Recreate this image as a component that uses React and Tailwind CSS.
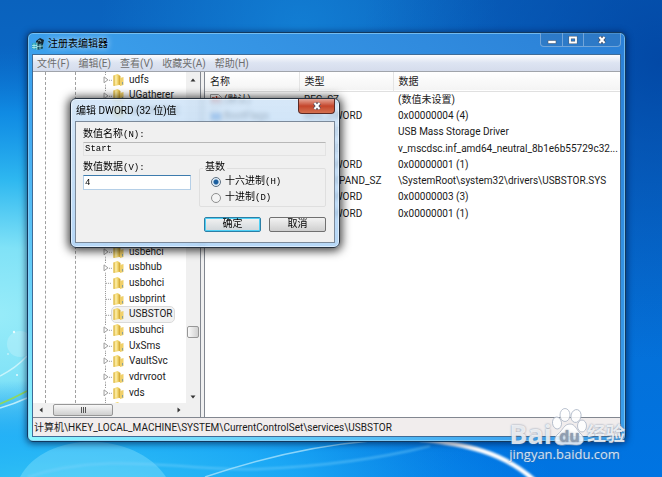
import { useState } from 'react';

const MENUS = ['文件(F)', '编辑(E)', '查看(V)', '收藏夹(A)', '帮助(H)'];

const KEYS = [
  { name: 'udfs', expandable: true },
  { name: 'UGatherer', expandable: true },
  { name: 'UGTHRSVC', expandable: true },
  { name: 'UI0Detect', expandable: false },
  { name: 'uliagpkx', expandable: true },
  { name: 'umbus', expandable: true },
  { name: 'UmPass', expandable: true },
  { name: 'umpusb', expandable: true },
  { name: 'upnphost', expandable: true },
  { name: 'usbccgp', expandable: false },
  { name: 'usbcir', expandable: false },
  { name: 'usbehci', expandable: true },
  { name: 'usbhub', expandable: true },
  { name: 'usbohci', expandable: false },
  { name: 'usbprint', expandable: false },
  { name: 'USBSTOR', expandable: false },
  { name: 'usbuhci', expandable: true },
  { name: 'UxSms', expandable: true },
  { name: 'VaultSvc', expandable: true },
  { name: 'vdrvroot', expandable: true },
  { name: 'vds', expandable: true },
  { name: '', expandable: true },
];

const VALUES = [
  { name: '(默认)', type: 'REG_SZ', data: '(数值未设置)' },
  { name: 'BootFlags', type: 'REG_DWORD', data: '0x00000004 (4)' },
  { name: 'DisplayName', type: 'REG_SZ', data: 'USB Mass Storage Driver' },
  { name: 'DriverPack', type: 'REG_SZ', data: 'v_mscdsc.inf_amd64_neutral_8b1e6b55729c32...' },
  { name: 'ErrorControl', type: 'REG_DWORD', data: '0x00000001 (1)' },
  { name: 'ImagePath', type: 'REG_EXPAND_SZ', data: '\\SystemRoot\\system32\\drivers\\USBSTOR.SYS' },
  { name: 'Start', type: 'REG_DWORD', data: '0x00000003 (3)' },
  { name: 'Type', type: 'REG_DWORD', data: '0x00000001 (1)' },
];

function Wallpaper() {
  return (
    <svg className="absolute inset-0 h-full w-full" viewBox="0 0 662 477" preserveAspectRatio="none" aria-hidden="true">
      <defs>
        <linearGradient id="sky" x1="0" y1="0" x2="0" y2="1">
          <stop offset="0" stopColor="#0a62bd" />
          <stop offset="0.3" stopColor="#0a6bcb" />
          <stop offset="1" stopColor="#0074e2" />
        </linearGradient>
        <radialGradient id="glow" gradientUnits="userSpaceOnUse" cx="0" cy="0" r="1" gradientTransform="translate(-10 315) scale(560 270)">
          <stop offset="0" stopColor="#98ecf9" />
          <stop offset="0.25" stopColor="#80e2f7" />
          <stop offset="0.5" stopColor="#2fb8f0" />
          <stop offset="0.75" stopColor="#1296ec" stopOpacity="0.75" />
          <stop offset="1" stopColor="#0a78d8" stopOpacity="0" />
        </radialGradient>
        <radialGradient id="base" gradientUnits="userSpaceOnUse" cx="0" cy="0" r="1" gradientTransform="translate(60 490) scale(500 110)">
          <stop offset="0" stopColor="#34c6f4" />
          <stop offset="0.5" stopColor="#1eaef8" stopOpacity="0.8" />
          <stop offset="1" stopColor="#0a90f0" stopOpacity="0" />
        </radialGradient>
        <radialGradient id="corner" gradientUnits="userSpaceOnUse" cx="662" cy="60" r="300">
          <stop offset="0" stopColor="#003f9c" stopOpacity="0.75" />
          <stop offset="1" stopColor="#0048a8" stopOpacity="0" />
        </radialGradient>
        <radialGradient id="top" gradientUnits="userSpaceOnUse" cx="300" cy="30" r="200">
          <stop offset="0" stopColor="#1484d8" stopOpacity="0.8" />
          <stop offset="1" stopColor="#1484d8" stopOpacity="0" />
        </radialGradient>
        <filter id="soft"><feGaussianBlur stdDeviation="1" /></filter>
      </defs>
      <rect width="662" height="477" fill="url(#sky)" />
      <rect width="662" height="477" fill="url(#top)" />
      <rect width="662" height="477" fill="url(#corner)" />
      <rect width="662" height="477" fill="url(#glow)" />
      <rect width="662" height="477" fill="url(#base)" />
      <path d="M20 477C45 430 135 430 166 477Z" fill="#a8f2ff" opacity="0.3" />
      <circle cx="20" cy="344" r="13" fill="#fff" opacity="0.2" />
      <g fill="#fff" opacity="0.8">
        <circle cx="14" cy="332" r="1.2" />
        <circle cx="17" cy="375" r="1" />
        <circle cx="8" cy="354" r="0.8" />
      </g>
      <path d="M0 376Q16 368 27 356M0 408Q14 404 27 398" stroke="#d8f8fd" strokeWidth="1.5" fill="none" opacity="0.8" />
      <path d="M0 404Q14 398 27 391" stroke="#8fd860" strokeWidth="1.8" fill="none" />
      <path d="M28 477C110 450 190 472 260 469C330 466 390 456 430 446" stroke="#7fd4fc" strokeWidth="2" fill="none" opacity="0.5" filter="url(#soft)" />
      <path d="M205 477C255 460 310 446 370 441" stroke="#a8e2fd" strokeWidth="1.5" fill="none" opacity="0.8" />
      <path d="M420 439C465 444 503 452 534 480" stroke="#fff" strokeWidth="4.5" fill="none" filter="url(#soft)" />
    </svg>
  );
}

function RegeditIcon() {
  return (
    <svg className="h-3 w-3" viewBox="0 0 12 12" aria-hidden="true">
      <path d="M0 5.500l5-1.500v8l-5-1.500z" fill="#2ba3b8" />
      <path d="M5 5l6 1v4.500l-6 1.500z" fill="#12505f" />
      <path d="M4 3l4-3 4 2-1 4.500-2-1-2 .5-3-1z" fill="#142630" />
      <path d="M0 7.500h5M0 9.500h5M2 5.500v5.500M5 4v8M5 8.500l6-.5M8 6v5" stroke="#c4f4f7" strokeWidth="0.7" />
      <path d="M6 3l2-1 1 2" stroke="#8fc7d4" strokeWidth="0.7" fill="none" />
    </svg>
  );
}

function FolderIcon() {
  return (
    <svg className="h-3 w-[11px] shrink-0" viewBox="0 0 11 12" aria-hidden="true">
      <path d="M0.500 1.500l4-1.500 2 1v10l-6 1z" fill="#f3d873" />
      <path d="M0.500 1.500h1v10.500l-1-.3z" fill="#d9b54a" />
      <path d="M3 1.500v9" stroke="#fdf1b4" strokeWidth="1.200" />
      <path d="M5.500 1l2 1v9.500l-2-1z" fill="#d6ad3c" />
      <path d="M7 4l3.500-1v8l-3.500 1z" fill="#f0d06a" />
      <path d="M9.500 8v2.500" stroke="#6f93a8" strokeWidth="0.800" />
    </svg>
  );
}

function ValueIcon({ text }) {
  return (
    <svg className="h-3 w-3 shrink-0" viewBox="0 0 12 12" aria-hidden="true">
      <path d="M0.500 0.500h8l3 3v8h-11z" fill="#fff" stroke="#9a9a9a" />
      {text ? (
        <path d="M2 4h2v4H2.500V6H4M6.500 2v6h3V4.500H6" fill="none" stroke="#c8371f" strokeWidth="1.400" />
      ) : (
        <path d="M1 3h10v7H1z" fill="#2f78d0" />
      )}
    </svg>
  );
}

function Arrow({ d }) {
  return (
    <svg className="h-2 w-2" viewBox="0 0 8 8" aria-hidden="true">
      <path d={d} fill="#333" />
    </svg>
  );
}

function CloseGlyph() {
  return (
    <svg className="h-2 w-2.5" viewBox="0 0 10 8" aria-hidden="true">
      <path d="M2.500 1l5 6M7.500 1l-5 6" stroke="#4b4f60" strokeWidth="3.600" />
      <path d="M2.500 1l5 6M7.500 1l-5 6" stroke="#fff" strokeWidth="2" />
    </svg>
  );
}

function WindowButtons() {
  return (
    <div className="flex h-[14px] rounded-b border border-t-0 border-[#8fb8e2]/70 bg-[#2f74bd]/60">
      <button type="button" aria-label="最小化" className="flex w-[22px] items-center justify-center border-r border-[#8fb8e2]/70">
        <svg className="h-2 w-2.5" viewBox="0 0 10 8" aria-hidden="true">
          <path d="M1 4.500h8v3h-8z" fill="#fff" stroke="#4b5a70" strokeWidth="0.6" />
        </svg>
      </button>
      <button type="button" aria-label="最大化" className="flex w-[21px] items-center justify-center border-r border-[#8fb8e2]/70">
        <svg className="h-2 w-2.5" viewBox="0 0 10 8" aria-hidden="true">
          <path d="M2 1.500h6v5h-6z" fill="none" stroke="#4b5a70" strokeWidth="2.800" />
          <path d="M2 1.500h6v5h-6z" fill="none" stroke="#fff" strokeWidth="1.800" />
        </svg>
      </button>
      <button type="button" aria-label="关闭" className="flex w-9 items-center justify-center">
        <CloseGlyph />
      </button>
    </div>
  );
}

function KeyTree() {
  const [selected, setSelected] = useState('USBSTOR');
  return (
    <div className="flex w-[168px] shrink-0 flex-col border-r border-[#828790] bg-white">
      <div className="flex min-h-0 flex-1">
        <div className="flex min-w-0 flex-1 overflow-hidden">
          <div className="w-[13px] shrink-0 border-r border-dashed border-[#a0a0a0]" />
          <div className="w-[30px] shrink-0 border-r border-dashed border-[#a0a0a0]" />
          <ul className="ml-6 grid h-[344px] auto-rows-fr">
            {KEYS.map((key) => (
              <li key={key.name} className="flex items-center">
                <span className="flex h-full w-3 shrink-0 items-center">
                  {key.expandable ? (
                    <svg className="h-full w-full" viewBox="0 0 12 16" aria-hidden="true">
                      <path d="M5.500 0v3M5.500 13v3" stroke="#909090" strokeDasharray="1 1" />
                      <path d="M4 5l4 3-4 3z" fill="#fff" stroke="#9a9a9a" />
                      <path d="M9 8.500h3" stroke="#909090" strokeDasharray="1 1" />
                    </svg>
                  ) : (
                    <svg className="h-full w-full" viewBox="0 0 12 16" aria-hidden="true">
                      <path d="M5.500 0v16M6 8.500h6" stroke="#909090" strokeDasharray="1 1" />
                    </svg>
                  )}
                </span>
                <button
                  type="button"
                  onClick={() => setSelected(key.name)}
                  className={
                    selected === key.name
                      ? 'flex h-full items-center gap-[5px] rounded-sm bg-[#f2f2f2] pr-0.5 pl-px leading-3 outline outline-[#dadada]'
                      : 'flex h-full items-center gap-[5px] pr-0.5 pl-px leading-3'
                  }
                >
                  <FolderIcon />
                  {key.name}
                </button>
              </li>
            ))}
          </ul>
        </div>
        <div className="flex w-[14px] shrink-0 flex-col items-center bg-[#f0f0f0] pt-1 pb-0.5">
          <Arrow d="M1.500 5.500l2.500-3 2.500 3z" />
          <div className="flex-1" />
          <div className="h-3 w-3 rounded-xs border border-[#979797] bg-linear-to-r from-[#fafafa] to-[#d0d0d0]" />
          <div className="h-[55px]" />
          <Arrow d="M1.500 2.500l2.500 3 2.500-3z" />
        </div>
      </div>
      <div className="flex h-[14px] shrink-0 items-center bg-[#f0f0f0] pr-[17px] pl-1">
        <Arrow d="M5.500 1.500l-3 2.500 3 2.500z" />
        <div className="ml-2 flex h-3 w-[60px] items-center justify-center gap-px rounded-xs border border-[#979797] bg-linear-to-b from-[#f8f8f8] to-[#cfcfcf]">
          <span className="h-1.5 w-px bg-[#555]" />
          <span className="h-1.5 w-px bg-[#555]" />
          <span className="h-1.5 w-px bg-[#555]" />
        </div>
        <div className="flex-1" />
        <Arrow d="M2.500 1.500l3 2.500-3 2.500z" />
      </div>
    </div>
  );
}

function ValueList() {
  return (
    <div className="min-w-0 flex-1 overflow-hidden border-l border-[#828790] bg-white">
      <table className="h-[150px] w-full table-fixed border-collapse text-left whitespace-nowrap">
        <colgroup>
          <col className="w-[94px]" />
          <col className="w-[94px]" />
          <col />
        </colgroup>
        <thead>
          <tr className="h-[19px] border-b border-[#e0e0e0] bg-linear-to-b from-white to-[#f4f4f4]">
            <th className="border-r border-[#e4e4e4] pl-[5px] font-normal">名称</th>
            <th className="border-r border-[#e4e4e4] pl-[5px] font-normal">类型</th>
            <th className="pl-[5px] font-normal">数据</th>
          </tr>
        </thead>
        <tbody>
          {VALUES.map((value) => (
            <tr key={value.name} className="leading-4">
              <td className="pl-[5px]">
                <span className="flex items-center gap-0.5">
                  <ValueIcon text={value.type !== 'REG_DWORD'} />
                  {value.name}
                </span>
              </td>
              <td className="pl-[5px]">{value.type}</td>
              <td className="pl-[5px]">{value.data}</td>
            </tr>
          ))}
        </tbody>
      </table>
    </div>
  );
}

function BaseOption({ label, hotkey, checked, onChange }) {
  return (
    <label className="flex h-4 items-center gap-1">
      <input
        type="radio"
        name="base"
        checked={checked}
        onChange={onChange}
        className="h-[10px] w-[10px] appearance-none rounded-full border border-[#8e8f8f] bg-[#f4f4f4] checked:border-[#5c6e80] checked:bg-radial checked:from-[#1b5f9e] checked:from-35% checked:to-[#e4f0f8] checked:to-55%"
      />
      <span>{label}<span className="text-[9px]">({hotkey})</span></span>
    </label>
  );
}

function EditDialog() {
  const [data, setData] = useState('4');
  const [base, setBase] = useState('hex');
  return (
    <div
      role="dialog"
      aria-label="编辑 DWORD (32 位)值"
      className="absolute top-[98px] left-[70px] w-[270px] rounded-md border border-[#27323f] bg-linear-to-b from-[#c9e0f6]/75 to-[#a9d0f5]/85 px-1 pb-1 shadow-[0_1px_10px_2px_rgba(0,0,0,0.75)] inset-ring inset-ring-white/50 backdrop-blur-[2px]"
    >
      <div className="flex h-[22px] items-center justify-between pl-px">
        <h2 className="text-[10px] text-black">编辑 DWORD (32 位)值</h2>
        <button
          type="button"
          aria-label="关闭"
          className="flex h-[15px] w-[37px] items-center justify-center self-start rounded-b border border-t-0 border-[#5b2a25] bg-linear-to-b from-[#e3a597] via-[#c4452b] to-[#d4704f]"
        >
          <CloseGlyph />
        </button>
      </div>
      <form
        className="border border-[#7c8a9a] bg-[#f0f0f0] pt-[7px] pr-2 pb-[10px] pl-[7px] font-['Liberation_Mono','Noto_Sans_CJK_SC',monospace] text-[10px] leading-3 text-black"
        onSubmit={(e) => e.preventDefault()}
      >
        <label htmlFor="value-name" className="block">数值名称<span className="text-[9px]">(N):</span></label>
        <input
          id="value-name"
          readOnly
          value="Start"
          className="mt-px block h-[14px] w-full border border-[#e3e3e3] border-t-[#b8b8b8] bg-[#f0f0f0] px-px text-[9px] outline-none"
        />
        <div className="mt-1.5 flex gap-2">
          <div className="w-[108px]">
            <label htmlFor="value-data" className="block">数值数据<span className="text-[9px]">(V):</span></label>
            <input
              id="value-data"
              value={data}
              onChange={(e) => setData(e.target.value)}
              className="mt-px block h-[15px] w-full border border-[#b5cfe7] border-t-[#3d7bad] bg-white px-px text-[9px] outline-none"
            />
          </div>
          <fieldset className="min-w-0 flex-1 rounded-xs border border-[#dfdfdf] px-[11px]">
            <legend className="-ml-2 px-0.5">基数</legend>
            <BaseOption label="十六进制" hotkey="H" checked={base === 'hex'} onChange={() => setBase('hex')} />
            <BaseOption label="十进制" hotkey="D" checked={base === 'dec'} onChange={() => setBase('dec')} />
          </fieldset>
        </div>
        <div className="mt-2.5 flex justify-end gap-2">
          <button type="submit" className="flex h-[15px] w-[57px] items-center justify-center rounded-xs border border-[#2c7fa6] bg-linear-to-b from-[#f2f2f2] to-[#d0d6da] leading-[15px] inset-ring inset-ring-[#4fd0f5]">确定</button>
          <button type="button" className="flex h-[15px] w-[57px] items-center justify-center rounded-xs border border-[#707070] bg-linear-to-b from-[#f2f2f2] to-[#cfcfcf] leading-[15px]">取消</button>
        </div>
      </form>
    </div>
  );
}

function Watermark() {
  return (
    <div className="absolute right-[37px] bottom-[15px] text-white/80 text-shadow-[0_0_2px_rgba(90,110,140,0.8)]">
      <div className="flex items-end font-['Open_Sans','Noto_Sans_CJK_SC',sans-serif] leading-6 font-bold">
        <span className="text-[27px]">Bai</span>
        <span className="relative flex h-[38px] w-[35px] items-end justify-center">
          <svg className="absolute inset-0 h-full w-full" viewBox="0 0 35 38" aria-hidden="true">
            <g fill="#fff" fillOpacity="0.85" stroke="#a9b4c4" strokeWidth="0.8">
              <ellipse cx="13" cy="7" rx="5" ry="6.500" />
              <ellipse cx="24" cy="8" rx="5" ry="6.500" transform="rotate(12 24 8)" />
              <ellipse cx="5" cy="15" rx="4.500" ry="6" transform="rotate(-8 5 15)" />
              <ellipse cx="30" cy="18" rx="4.500" ry="6" />
              <path d="M18 16c5 0 6 5 10 9 6 5 4 12-3 12-4 0-10-1-14 0-8 1-11-6-5-11 5-4 6-10 12-10z" />
            </g>
          </svg>
          <span className="relative text-base leading-5 text-[#8f9db0]">du</span>
        </span>
        <span className="text-[19px] leading-6">经验</span>
      </div>
      <a href="#jingyan" className="block font-['Open_Sans',sans-serif] text-[13px] leading-4">jingyan.baidu.com</a>
    </div>
  );
}

export default function App() {
  return (
    <main className="relative flex h-screen overflow-hidden pt-8 pr-[36px] pb-[35px] pl-[27px] font-[Roboto,'Noto_Sans_CJK_SC',sans-serif] text-[10px] text-[#1a1a1a] select-none">
      <Wallpaper />
      <section className="relative flex min-w-0 flex-1 flex-col rounded-md border border-[#12395f] bg-linear-to-tr from-[#90f8ff] via-[#3fa6f0] via-40% to-[#2a7fd6] px-1 pb-1 shadow-[0_1px_6px_1px_rgba(0,20,60,0.6)] inset-ring inset-ring-[#8fd0f8]/70">
        <header className="flex h-[21px] shrink-0 items-center">
          <RegeditIcon />
          <h1 className="ml-1 text-black text-shadow-[0_0_6px_#fff]">注册表编辑器</h1>
          <div className="ml-auto self-start">
            <WindowButtons />
          </div>
        </header>
        <div className="flex min-h-0 flex-1 flex-col border border-[#3f6c98]">
          <nav className="flex h-[17px] shrink-0 items-center gap-[9px] border-b border-[#a0a4ab] bg-linear-to-b from-[#fbfcfe] via-[#dde4f2] to-[#d5dcec] pl-1 text-[#6d6d6d]">
            {MENUS.map((menu) => (
              <button key={menu} type="button">{menu}</button>
            ))}
          </nav>
          <div className="flex min-h-0 flex-1 gap-[3px] bg-[#f0f0f0]">
            <KeyTree />
            <ValueList />
          </div>
          <footer className="flex h-[19px] shrink-0 items-center border-t border-[#828790] bg-[#f1eded] pl-px">
            计算机\HKEY_LOCAL_MACHINE\SYSTEM\CurrentControlSet\services\USBSTOR
          </footer>
        </div>
      </section>
      <EditDialog />
      <Watermark />
    </main>
  );
}
